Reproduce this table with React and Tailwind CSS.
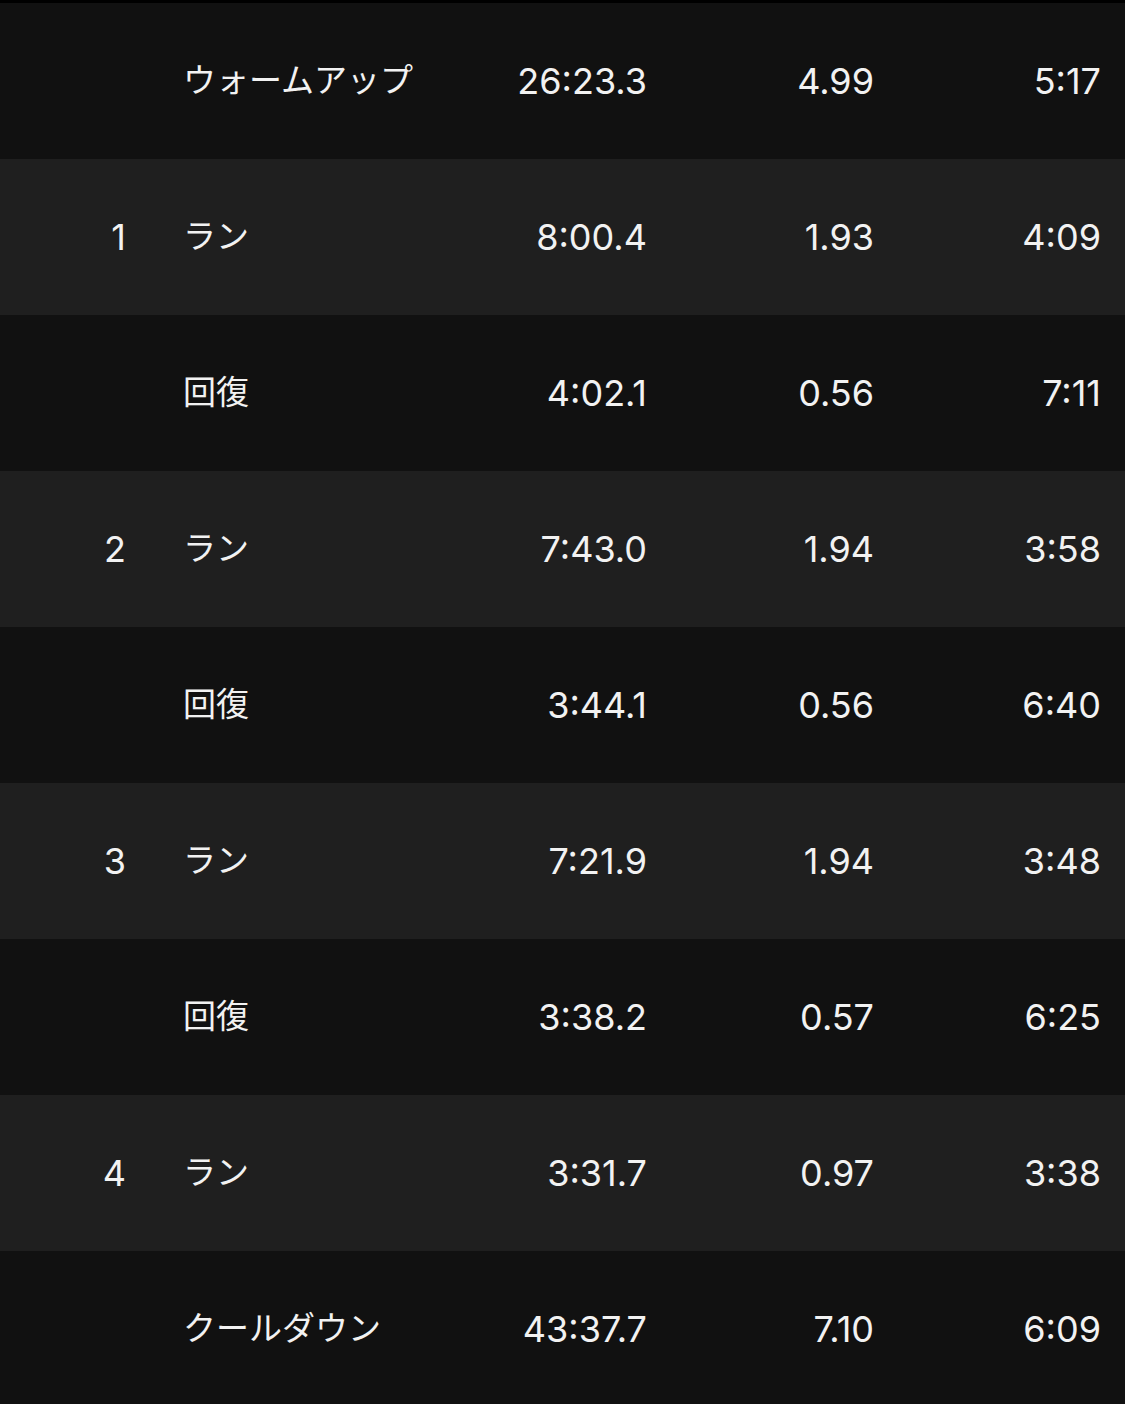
const rows = [
  { no: "", label: "ウォームアップ", time: "26:23.3", dist: "4.99", pace: "5:17" },
  { no: "1", label: "ラン", time: "8:00.4", dist: "1.93", pace: "4:09" },
  { no: "", label: "回復", time: "4:02.1", dist: "0.56", pace: "7:11" },
  { no: "2", label: "ラン", time: "7:43.0", dist: "1.94", pace: "3:58" },
  { no: "", label: "回復", time: "3:44.1", dist: "0.56", pace: "6:40" },
  { no: "3", label: "ラン", time: "7:21.9", dist: "1.94", pace: "3:48" },
  { no: "", label: "回復", time: "3:38.2", dist: "0.57", pace: "6:25" },
  { no: "4", label: "ラン", time: "3:31.7", dist: "0.97", pace: "3:38" },
  { no: "", label: "クールダウン", time: "43:37.7", dist: "7.10", pace: "6:09" },
];

export default function App() {
  return (
    <div
      className="w-[1125px] h-[1404px] overflow-hidden bg-[#111111] text-[#f2f2f2] border-t-[3px] border-black"
      style={{ fontFamily: 'Inter, "Noto Sans CJK JP", sans-serif' }}
    >
      {rows.map((r, i) => (
        <div
          key={i}
          className={`flex items-center h-[156px] text-[36px] ${i % 2 === 1 ? "bg-[#1f1f1f]" : "bg-[#111111]"}`}
        >
          <div className="w-[126px] text-right">{r.no}</div>
          <div className="w-[57px]" />
          <div className="w-[252px] whitespace-nowrap text-[33px]">{r.label}</div>
          <div className="w-[212px] text-right">{r.time}</div>
          <div className="w-[227px] text-right">{r.dist}</div>
          <div className="w-[227px] text-right">{r.pace}</div>
        </div>
      ))}
    </div>
  );
}
